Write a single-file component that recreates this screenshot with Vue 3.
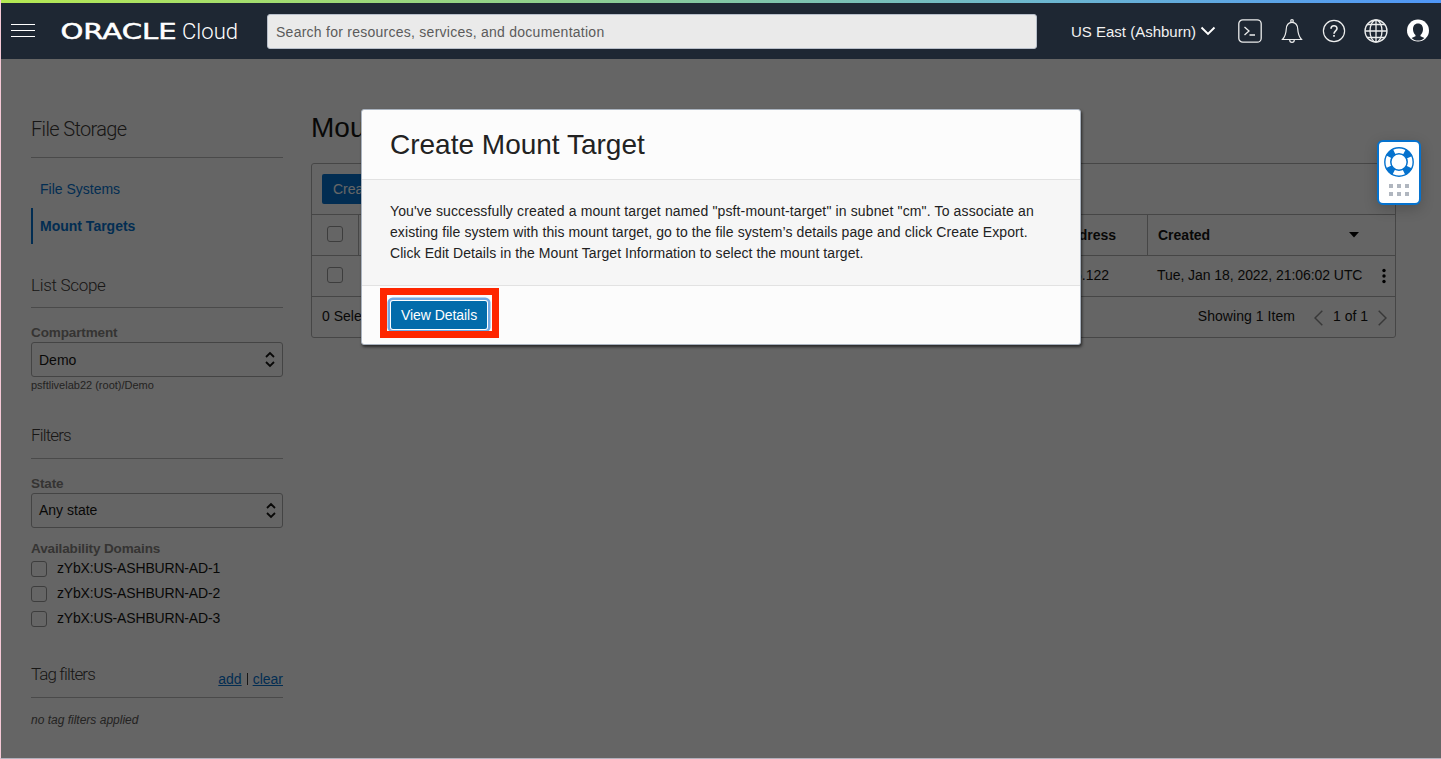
<script setup>
const domains = ['zYbX:US-ASHBURN-AD-1', 'zYbX:US-ASHBURN-AD-2', 'zYbX:US-ASHBURN-AD-3']
</script>

<template>
  <div class="app">
    <div class="rainbow"></div>
    <header class="topbar">
      <button class="burger" aria-label="Menu"><i></i><i></i><i></i></button>
      <svg class="logo" width="180" height="30" viewBox="0 0 180 30">
        <text class="logo-oracle" x="-0.500" y="23" textLength="116" lengthAdjust="spacingAndGlyphs">ORACLE</text>
        <text class="logo-cloud" x="121" y="23" textLength="56" lengthAdjust="spacingAndGlyphs">Cloud</text>
      </svg>
      <div class="search">Search for resources, services, and documentation</div>
      <div class="region">
        <span>US East (Ashburn)</span>
        <svg width="16" height="10" viewBox="0 0 16 10"><path d="M1.500 1.500 L8 8 L14.500 1.500" fill="none" stroke="#fff" stroke-width="1.900" /></svg>
      </div>
      <nav class="icons">
        <svg width="24" height="24" viewBox="0 0 24 24" fill="none" stroke="#eceded" stroke-width="1.300">
          <rect x="0.800" y="0.800" width="22.400" height="22.400" rx="4" />
          <path d="M6.500 8 L11 12 L6.500 16 M11.500 16 H17" />
        </svg>
        <svg width="24" height="24" viewBox="0 0 24 24" fill="none" stroke="#eceded" stroke-width="1.200">
          <circle cx="12" cy="2" r="1.300" />
          <path d="M2.500 20.500 C5 17.500 6 15 6.200 10.500 C6.400 6 8.500 3.400 12 3.400 C15.500 3.400 17.600 6 17.800 10.500 C18 15 19 17.500 21.500 20.500 Z" />
          <path d="M9.700 21 A2.300 2.300 0 0 0 14.300 21" />
        </svg>
        <svg width="24" height="24" viewBox="0 0 24 24" fill="none" stroke="#eceded" stroke-width="1.200">
          <circle cx="12" cy="12" r="10.600" />
          <path d="M9 9.700 C9 5.700 15 5.800 15 9.500 C15 12 12 11.700 12 14.800" stroke-width="1.600" />
          <path d="M12 16 V17.800" stroke-width="1.700" />
        </svg>
        <svg width="24" height="24" viewBox="0 0 24 24" fill="none" stroke="#eceded" stroke-width="1.300">
          <circle cx="12" cy="12" r="11" />
          <ellipse cx="12" cy="12" rx="6" ry="11" />
          <path d="M12 1 V23 M1 12 H23 M3.300 5.500 H20.700 M3.300 18.500 H20.700" />
        </svg>
        <svg width="24" height="24" viewBox="0 0 24 24">
          <circle cx="12" cy="11.500" r="11" fill="#fff" />
          <path d="M12 4.600 C8.700 4.600 7 7 7 10.200 C7 12.700 8 14.800 9.500 15.900 V17.300 L5.600 19 C8.500 22.400 15.500 22.400 18.400 19 L14.500 17.300 V15.900 C16 14.800 17 12.700 17 10.200 C17 7 15.300 4.600 12 4.600 Z" fill="#1e2733" />
        </svg>
      </nav>
    </header>

    <div class="page">
      <aside class="side">
        <h2 class="side-title">File Storage</h2>
        <nav class="menu">
          <a>File Systems</a>
          <a class="active">Mount Targets</a>
        </nav>

        <h3 class="section scope">List Scope</h3>
        <label class="label">Compartment</label>
        <div class="select">
          <span>Demo</span>
          <svg width="10" height="17" viewBox="0 0 10 17"><path d="M1 6 L5 2 L9 6 M1 11 L5 15 L9 11" fill="none" stroke="#161513" stroke-width="1.800" /></svg>
        </div>
        <p class="hint">psftlivelab22 (root)/Demo</p>

        <h3 class="section filters">Filters</h3>
        <label class="label">State</label>
        <div class="select state">
          <span>Any state</span>
          <svg width="10" height="17" viewBox="0 0 10 17"><path d="M1 6 L5 2 L9 6 M1 11 L5 15 L9 11" fill="none" stroke="#161513" stroke-width="1.800" /></svg>
        </div>
        <label class="label domains">Availability Domains</label>
        <div v-for="d in domains" :key="d" class="check-row"><i class="box"></i><span>{{ d }}</span></div>

        <div class="section tags">
          <span class="tags-name">Tag filters</span>
          <span class="links"><a>add</a><i></i><a>clear</a></span>
        </div>
        <p class="empty">no tag filters applied</p>
      </aside>

      <main class="main">
        <h1>Mou</h1>
        <section class="table">
          <div class="tools"><button>Create</button></div>
          <div class="row head">
            <div class="c-check"><i class="box"></i></div>
            <div class="c-name"></div>
            <div class="c-ip"><span>IP Address</span></div>
            <div class="c-date"><span>Created</span><svg width="10" height="6" viewBox="0 0 10 6"><path d="M0 0 H10 L5 5.500 Z" fill="#000" /></svg></div>
          </div>
          <div class="row">
            <div class="c-check"><i class="box"></i></div>
            <div class="c-name"></div>
            <div class="c-ip"><span>10.0.6.122</span></div>
            <div class="c-date"><span class="stamp">Tue, Jan 18, 2022, 21:06:02 UTC</span><svg width="4" height="16" viewBox="0 0 4 16"><circle cx="2" cy="2.500" r="1.700" /><circle cx="2" cy="8" r="1.700" /><circle cx="2" cy="13.500" r="1.700" /></svg></div>
          </div>
          <div class="foot">
            <span class="sel">0 Selected</span>
            <span class="count">Showing 1 Item</span>
            <svg width="9" height="16" viewBox="0 0 9 16"><path d="M8.300 0.700 L1 8 L8.300 15.300" /></svg>
            <span class="pages">1 of 1</span>
            <svg width="9" height="16" viewBox="0 0 9 16"><path d="M0.700 0.700 L8 8 L0.700 15.300" /></svg>
          </div>
        </section>
      </main>
    </div>

    <div class="shade"></div>

    <div class="dialog">
      <div class="d-head">Create Mount Target</div>
      <div class="d-body">
        <p class="l1">You've successfully created a mount target named "psft-mount-target" in subnet "cm". To associate an</p>
        <p class="l2">existing file system with this mount target, go to the file system’s details page and click Create Export.</p>
        <p class="l3">Click Edit Details in the Mount Target Information to select the mount target.</p>
      </div>
      <div class="d-foot"><button>View Details</button></div>
      <div class="highlight"></div>
    </div>

    <div class="help">
      <svg width="30" height="30" viewBox="0 0 30 30">
        <circle cx="15" cy="15" r="11.200" fill="none" stroke="#fff" stroke-width="7" />
        <circle cx="15" cy="15" r="11.200" fill="none" stroke="#0572ce" stroke-width="7" stroke-dasharray="7.200 10.393" stroke-dashoffset="-5.196" />
        <circle cx="15" cy="15" r="14.200" fill="none" stroke="#0572ce" stroke-width="1.400" />
        <circle cx="15" cy="15" r="8.200" fill="#fff" stroke="#0572ce" stroke-width="1.500" />
      </svg>
      <div class="grip"><i v-for="n in 6" :key="n"></i></div>
    </div>
  </div>
</template>

<style>
html, body { margin: 0; overflow: hidden; }
</style>

<style scoped>
* { box-sizing: border-box; }
h1, h2, h3, p { margin: 0; font-weight: 400; }
button { font: inherit; border: 0; padding: 0; }
.app {
  position: relative; width: 1441px; height: 759px; overflow: hidden;
  border-left: 1px solid #f5c9d6; border-bottom: 1px solid #b3b1bd;
  background: #fcfcfc; color: #161513;
  font-family: "Liberation Sans", Arial, sans-serif; font-size: 14px;
}
.rainbow { height: 3px; background: linear-gradient(90deg, #b5e853 0%, #8fd08e 38%, #6db7cf 72%, #4f96f7 100%); }
.topbar { position: relative; z-index: 2; height: 56px; background: #1e2733; display: flex; align-items: center; color: #fff; }
.burger { width: 24px; height: 13px; margin: 0 0 1px 10px; background: none; display: flex; flex-direction: column; justify-content: space-between; }
.burger i { height: 1px; width: 24px; background: #fff; }
.logo { margin-left: 26px; fill: #fff; }
.logo-oracle { font: 400 20.500px "DejaVu Sans", sans-serif; stroke: #fff; stroke-width: 0.500px; }
.logo-cloud { font: 300 22px Roboto, "Liberation Sans", sans-serif; }
.search { width: 770px; height: 35px; margin-left: 26px; padding-left: 8px; background: #eaeaea; border: 1px solid #b8bfca; border-radius: 3px; color: #5b5b5b; line-height: 34px; letter-spacing: 0.255px; }
.region { display: flex; align-items: center; width: 145px; justify-content: space-between; margin-left: 34px; font-size: 15px; color: #f2f2f2; }
.icons { display: flex; gap: 18px; margin-left: 22px; }
.icons svg { display: block; }

.page { display: flex; }
.side { width: 252px; margin-left: 30px; }
.side-title { height: 99px; padding-top: 56px; font: 300 20px/28px Roboto, sans-serif; letter-spacing: -0.650px; color: #3c3a37; border-bottom: 1px solid #b8b8b8; }
.menu { padding-top: 13px; }
.menu a { display: block; height: 36px; line-height: 36px; padding-left: 9px; color: #0572ce; margin-bottom: 1px; }
.menu .active { font-weight: 700; padding-left: 7px; border-left: 2px solid #0572ce; }
.section { font: 300 17px/24px Roboto, sans-serif; color: #3c3a37; border-bottom: 1px solid #b8b8b8; }
.scope { height: 35px; margin-top: 29px; letter-spacing: -0.300px; }
.filters { height: 36px; margin-top: 31px; letter-spacing: -0.850px; }
.label { display: block; height: 34px; padding-top: 17px; line-height: 16px; font-weight: 700; color: #86837f; font-size: 13.500px; letter-spacing: -0.120px; }
.select { height: 35px; border: 1px solid #aaa; border-radius: 3px; display: flex; align-items: center; justify-content: space-between; padding: 0 7px; }
.state { padding: 0 6px 0 7px; }
.state span { margin-bottom: 2px; }
.hint { font-size: 11px; line-height: 14px; margin-top: 1px; color: #5a5855; }
.domains { height: 28px; padding-top: 13px; }
.check-row { display: flex; height: 25px; align-items: flex-start; gap: 10px; line-height: 25px; letter-spacing: -0.170px; }
.box { display: block; width: 16px; height: 16px; border: 1px solid #999; border-radius: 3px; }
.check-row .box { margin-top: 5px; }
.tags { display: flex; justify-content: space-between; height: 36px; margin-top: 31px; }
.tags-name { letter-spacing: -0.900px; }
.links { display: flex; align-items: center; gap: 5px; font: 14px/24px "Liberation Sans", sans-serif; padding-bottom: 2px; }
.links a { color: #0572ce; text-decoration: underline; }
.links i { width: 1px; height: 12px; background: #3c3a37; }
.empty { font-style: italic; font-size: 12px; line-height: 16px; margin-top: 14px; color: #5a5855; }

.main { width: 1085px; margin-left: 28px; }
.main h1 { font-size: 28px; line-height: 36px; padding-top: 51px; height: 104px; }
.table { height: 175px; border: 1px solid #b0b0b0; border-radius: 3px; }
.tools { height: 50px; padding: 10px; }
.tools button { display: block; width: 60px; height: 30px; padding-left: 11px; text-align: left; border-radius: 2px; background: #0572ce; color: #fff; }
.row { display: flex; height: 41px; border-top: 1px solid #b0b0b0; }
.row > div { display: flex; align-items: center; }
.row .c-check { width: 46px; padding-left: 15px; align-items: flex-start; padding-top: 11px; }
.row:not(.head) span { transform: translateY(-1px); }
.head { font-weight: 700; }
.head > div + div { border-left: 1px solid #b0b0b0; }
.c-name { width: 589px; }
.c-ip { width: 200px; justify-content: flex-end; }
.head .c-ip { padding-right: 31px; }
.row:not(.head) .c-ip { padding-right: 38px; }
.c-date { flex: 1; padding: 0 9px 0 10px; justify-content: space-between; }
.stamp { letter-spacing: -0.060px; }
.head .c-date { padding-right: 36px; }
.foot { height: 41px; border-top: 1px solid #b0b0b0; display: flex; align-items: center; padding: 0 8px 0 10px; }
.foot span { transform: translateY(-1px); }
.foot svg { fill: none; stroke: #8c8c8c; stroke-width: 1.500; transform: translateY(1px); }
.count { margin-left: auto; margin-right: 19px; letter-spacing: 0.050px; }
.pages { margin: 0 10px; }

.shade { position: absolute; inset: 59px 0 0 0; background: rgba(0, 0, 0, 0.6); }
.dialog { position: absolute; left: 360px; top: 109px; width: 720px; height: 236px; background: #fcfcfc; border: 1px solid #aab3bf; border-radius: 3px; box-shadow: 1px 2px 3px rgba(0, 0, 0, 0.6); color: #222; }
.d-head { height: 70px; padding: 0 28px; font-size: 28px; line-height: 70px; border-bottom: 1px solid #e2e2e2; }
.d-body { height: 106px; padding: 21px 28px; background: #f6f6f6; border-bottom: 1px solid #e2e2e2; line-height: 21px; white-space: nowrap; }
.l1 { letter-spacing: 0.135px; }
.l2 { letter-spacing: 0.088px; }
.l3 { letter-spacing: 0.068px; }
.d-foot { padding: 15px 29px; }
.d-foot button { display: block; width: 96px; height: 28px; border-radius: 2px; background: #036cab; color: #fff; box-shadow: 0 0 0 1px #fff, 0 0 0 3.500px #73a9e3; letter-spacing: -0.050px; }
.highlight { position: absolute; left: 18px; top: 178px; width: 119px; height: 50px; border: 7px solid #fe2600; }
.help { position: absolute; left: 1376px; top: 140px; width: 44px; height: 65px; border: 2px solid #0572ce; border-radius: 6px; background: #fff; box-shadow: 0 4px 14px rgba(0, 0, 0, 0.2); display: flex; flex-direction: column; align-items: center; padding-top: 5px; }
.help svg { display: block; }
.grip { display: grid; grid-template-columns: repeat(3, 4px); gap: 4px; margin-top: 7px; }
.grip i { height: 4px; background: #b0b6bf; }
</style>
